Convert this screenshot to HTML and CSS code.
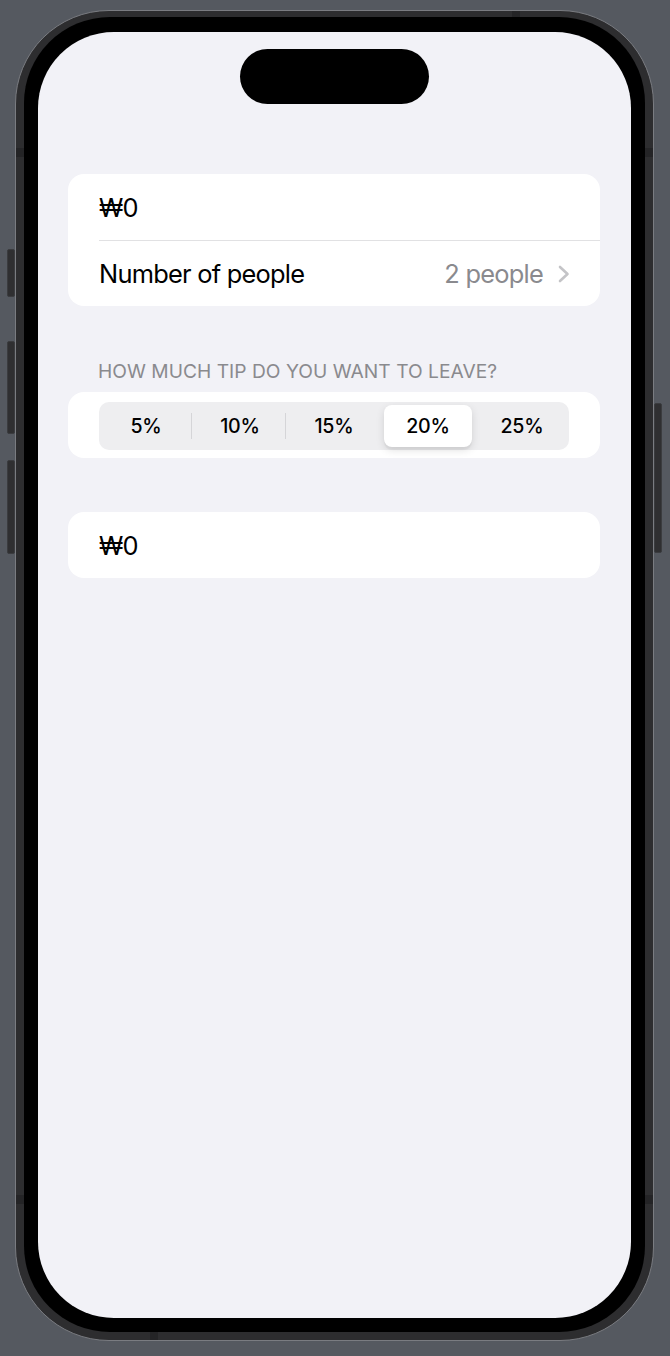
FILE: index.html
```html
<!DOCTYPE html>
<html lang="en">
<head>
<meta charset="utf-8">
<title>Tip Calculator</title>
<link rel="stylesheet" href="styles.css">
</head>
<body>
  <div class="device">
    <span class="hw btn-action"></span>
    <span class="hw btn-vol-up"></span>
    <span class="hw btn-vol-down"></span>
    <span class="hw btn-power"></span>
    <span class="band-mark mark-top"></span>
    <span class="band-mark mark-left-top"></span>
    <span class="band-mark mark-right-top"></span>
    <span class="band-mark mark-left-bottom"></span>
    <span class="band-mark mark-right-bottom"></span>
    <span class="band-mark mark-bottom"></span>
    <div class="bezel">
      <div class="screen">
        <div class="island"></div>
        <main class="form">
          <section class="card">
            <div class="row">
              <span class="label">₩0</span>
            </div>
            <div class="row row-link">
              <span class="label">Number of people</span>
              <span class="value">2 people
                <svg class="chevron" width="12" height="18" viewBox="0 0 12 18" aria-hidden="true">
                  <polyline points="2,2 9.5,9 2,16" fill="none" stroke="#c4c4c7" stroke-width="2.6" stroke-linecap="round" stroke-linejoin="round"/>
                </svg>
              </span>
            </div>
          </section>

          <h2 class="section-header">How much tip do you want to leave?</h2>
          <section class="card">
            <div class="row row-control">
              <div class="segmented">
                <span class="seg">5%</span>
                <span class="seg divided">10%</span>
                <span class="seg divided">15%</span>
                <span class="seg selected">20%</span>
                <span class="seg">25%</span>
              </div>
            </div>
          </section>

          <section class="card card-total">
            <div class="row">
              <span class="label">₩0</span>
            </div>
          </section>
        </main>
      </div>
    </div>
  </div>
</body>
</html>
```

FILE: styles.css
```css
* {
  box-sizing: border-box;
}

html, body {
  margin: 0;
  padding: 0;
}

body {
  width: 670px;
  height: 1356px;
  background: #555960;
  padding: 10px 0 0 15px;
  font-family: Inter, "Noto Sans", "Liberation Sans", sans-serif;
  overflow: hidden;
}

/* ---------- device frame ---------- */
.device {
  position: relative;
  width: 639px;
  height: 1331px;
  border: 1px solid #7a7c81;
  background: #2d2d2f;
  border-radius: 94px;
  padding: 6px 8px 8px 8px;
}

.bezel {
  background: #000;
  border-radius: 86px;
  padding: 15px 14px 14px 14px;
  height: 100%;
}

.screen {
  width: 593px;
  height: 1286px;
  background: #f2f2f7;
  border-radius: 76px;
  overflow: hidden;
  display: flex;
  flex-direction: column;
  align-items: center;
}

.hw {
  position: absolute;
  background: #2f2f31;
  border: 1px solid #3b3c3f;
  border-radius: 2px;
}
.btn-action   { left: -9px; top: 238px; width: 8px; height: 48px; }
.btn-vol-up   { left: -9px; top: 330px; width: 8px; height: 93px; }
.btn-vol-down { left: -9px; top: 449px; width: 8px; height: 94px; }
.btn-power    { left: 638px; top: 392px; width: 8px; height: 150px; }

.band-mark {
  position: absolute;
  background: #242426;
}
.mark-top          { left: 496px; top: 0; width: 8px; height: 6px; }
.mark-bottom       { left: 134px; bottom: 0; width: 8px; height: 8px; }
.mark-left-top     { left: 0; top: 137px; width: 8px; height: 9px; }
.mark-right-top    { right: 0; top: 137px; width: 8px; height: 9px; }
.mark-left-bottom  { left: 0; top: 1184px; width: 8px; height: 9px; }
.mark-right-bottom { right: 0; top: 1184px; width: 8px; height: 9px; }

.island {
  margin-top: 17px;
  width: 189px;
  height: 55px;
  background: #000;
  border-radius: 28px;
  flex: none;
}

/* ---------- form ---------- */
.form {
  width: 532px;
  margin-top: 70px;
  align-self: flex-start;
  margin-left: 30px;
  display: flex;
  flex-direction: column;
}

.card {
  background: #fff;
  border-radius: 16px;
  overflow: hidden;
}

.row {
  height: 66px;
  padding: 0 30px 0 31px;
  display: flex;
  align-items: center;
  justify-content: space-between;
  font-size: 25.4px;
  letter-spacing: -0.75px;
  color: #000;
}

.row + .row {
  position: relative;
}
.row + .row::before {
  content: "";
  position: absolute;
  left: 31px;
  right: 0;
  top: 0;
  height: 1px;
  background: #e1e1e3;
}

.value {
  color: #8a8a8e;
  display: flex;
  align-items: center;
  gap: 15px;
}

.chevron {
  display: block;
  margin-top: 1px;
}

.section-header {
  margin: 54px 0 0 0;
  padding: 0 0 0 30px;
  height: 32px;
  font-size: 19.2px;
  font-weight: 400;
  letter-spacing: 0.02px;
  text-transform: uppercase;
  color: #8a8a8e;
  line-height: 22px;
}

.card-total {
  margin-top: 54px;
}

/* ---------- segmented control ---------- */
.row-control {
  padding-top: 2px;
}

.segmented {
  width: 470px;
  height: 48px;
  background: #eeeef0;
  border-radius: 10px;
  display: grid;
  grid-template-columns: repeat(5, 1fr);
}

.seg {
  position: relative;
  display: flex;
  align-items: center;
  justify-content: center;
  font-size: 19.6px;
  font-weight: 500;
  letter-spacing: -0.2px;
  color: #000;
  border-radius: 8px;
}

.seg.divided::before {
  content: "";
  position: absolute;
  left: -2px;
  top: 11px;
  bottom: 11px;
  width: 1px;
  background: #d5d5d8;
}

.seg.selected {
  margin: 3px;
  background: #fff;
  box-shadow: 0 3px 8px rgba(0, 0, 0, 0.12), 0 3px 1px rgba(0, 0, 0, 0.04);
}
```
